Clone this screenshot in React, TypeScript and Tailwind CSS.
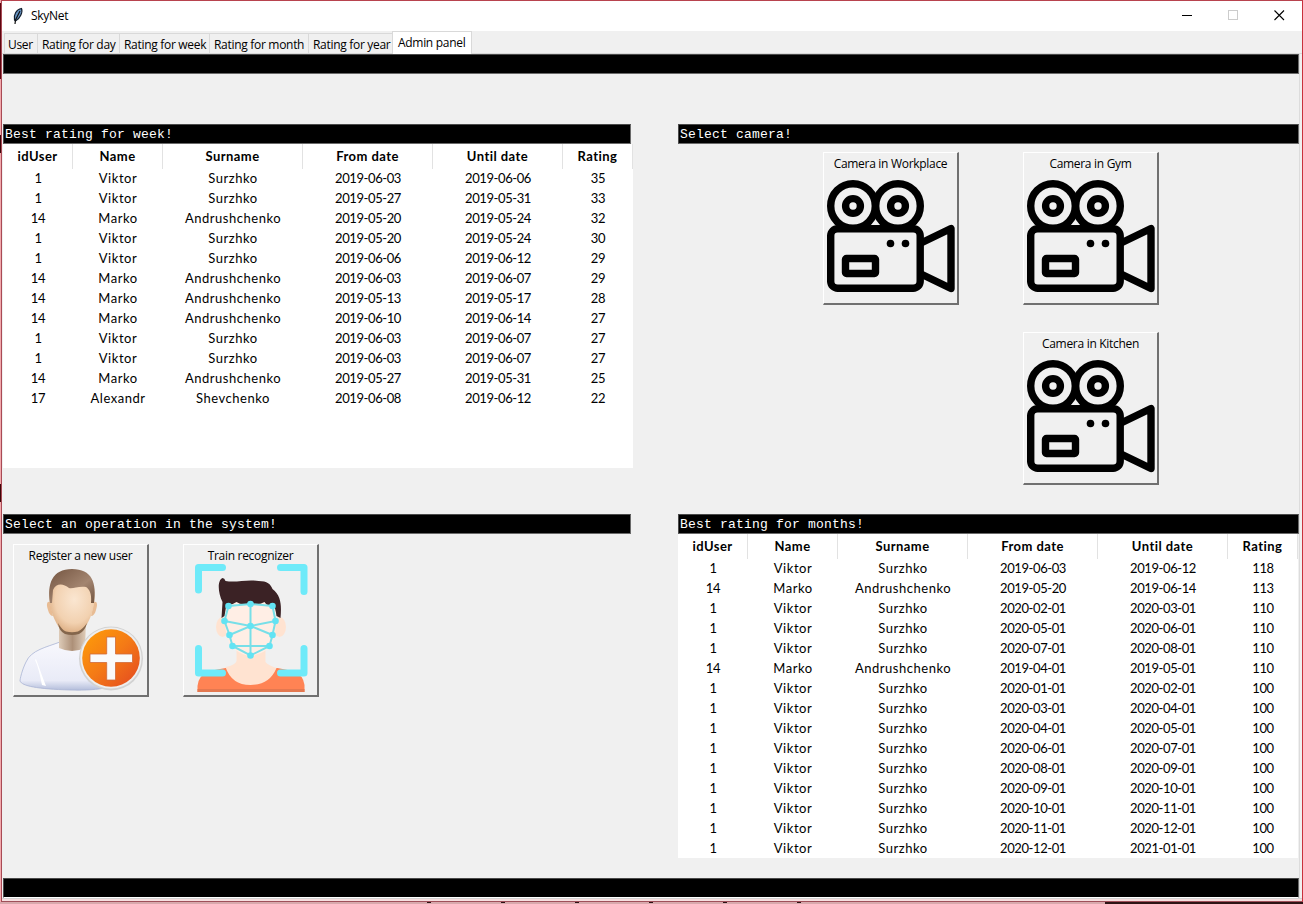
import React from 'react';

const week = [
  ['1', 'Viktor', 'Surzhko', '2019-06-03', '2019-06-06', '35'],
  ['1', 'Viktor', 'Surzhko', '2019-05-27', '2019-05-31', '33'],
  ['14', 'Marko', 'Andrushchenko', '2019-05-20', '2019-05-24', '32'],
  ['1', 'Viktor', 'Surzhko', '2019-05-20', '2019-05-24', '30'],
  ['1', 'Viktor', 'Surzhko', '2019-06-06', '2019-06-12', '29'],
  ['14', 'Marko', 'Andrushchenko', '2019-06-03', '2019-06-07', '29'],
  ['14', 'Marko', 'Andrushchenko', '2019-05-13', '2019-05-17', '28'],
  ['14', 'Marko', 'Andrushchenko', '2019-06-10', '2019-06-14', '27'],
  ['1', 'Viktor', 'Surzhko', '2019-06-03', '2019-06-07', '27'],
  ['1', 'Viktor', 'Surzhko', '2019-06-03', '2019-06-07', '27'],
  ['14', 'Marko', 'Andrushchenko', '2019-05-27', '2019-05-31', '25'],
  ['17', 'Alexandr', 'Shevchenko', '2019-06-08', '2019-06-12', '22'],
];

const months = [
  ['1', 'Viktor', 'Surzhko', '2019-06-03', '2019-06-12', '118'],
  ['14', 'Marko', 'Andrushchenko', '2019-05-20', '2019-06-14', '113'],
  ['1', 'Viktor', 'Surzhko', '2020-02-01', '2020-03-01', '110'],
  ['1', 'Viktor', 'Surzhko', '2020-05-01', '2020-06-01', '110'],
  ['1', 'Viktor', 'Surzhko', '2020-07-01', '2020-08-01', '110'],
  ['14', 'Marko', 'Andrushchenko', '2019-04-01', '2019-05-01', '110'],
  ['1', 'Viktor', 'Surzhko', '2020-01-01', '2020-02-01', '100'],
  ['1', 'Viktor', 'Surzhko', '2020-03-01', '2020-04-01', '100'],
  ['1', 'Viktor', 'Surzhko', '2020-04-01', '2020-05-01', '100'],
  ['1', 'Viktor', 'Surzhko', '2020-06-01', '2020-07-01', '100'],
  ['1', 'Viktor', 'Surzhko', '2020-08-01', '2020-09-01', '100'],
  ['1', 'Viktor', 'Surzhko', '2020-09-01', '2020-10-01', '100'],
  ['1', 'Viktor', 'Surzhko', '2020-10-01', '2020-11-01', '100'],
  ['1', 'Viktor', 'Surzhko', '2020-11-01', '2020-12-01', '100'],
  ['1', 'Viktor', 'Surzhko', '2020-12-01', '2021-01-01', '100'],
];

const heads = ['idUser', 'Name', 'Surname', 'From date', 'Until date', 'Rating'];

function Bar({ children, edge = 'border-b-[#6a6a6a]' }: { children?: React.ReactNode; edge?: string }) {
  return (
    <div
      className={`h-5 shrink-0 border border-t-[#4a4a4a] border-r-[#6a6a6a] border-l-[#4a4a4a] ${edge} bg-black pl-px font-['Liberation_Mono',monospace] text-[13px] leading-[19px] tracking-[0.2px] whitespace-pre text-white`}
    >
      {children}
    </div>
  );
}

function Table({ rows, cols, width }: { rows: string[][]; cols: string; width: string }) {
  return (
    <div className={`h-[324px] ${width} overflow-hidden bg-white font-[Lato,sans-serif] text-[13px] text-black`}>
      <div className={`grid h-6 ${cols} font-bold`}>
        {heads.map((h) => (
          <div key={h} className="border-r border-[#e2e2e2] text-center leading-[25px] tracking-[0.45px]">
            {h}
          </div>
        ))}
      </div>
      {rows.map((r, i) => (
        <div key={i} className={`grid h-5 ${cols} text-center leading-[21px]`}>
          {r.map((c, j) => (
            <div key={j} className={j === 1 || j === 2 ? 'tracking-[0.52px]' : 'tracking-[-0.4px]'}>
              {c}
            </div>
          ))}
        </div>
      ))}
    </div>
  );
}

function Camera() {
  return (
    <svg className="mt-[7px]" width="130" height="124" viewBox="0 0 130 124" fill="none" stroke="#000">
      <circle cx="27" cy="27" r="22.3" strokeWidth="7.4" />
      <circle cx="72" cy="27" r="22.3" strokeWidth="7.4" />
      <circle cx="27" cy="27" r="7.4" strokeWidth="7.4" />
      <circle cx="72" cy="27" r="7.4" strokeWidth="7.4" />
      <rect x="4.7" y="49.7" width="89.5" height="59.5" rx="7" strokeWidth="7.4" />
      <rect x="19.5" y="79.5" width="30" height="15" rx="1" strokeWidth="7.4" />
      <circle cx="64.5" cy="64.5" r="3.8" fill="#000" stroke="none" />
      <circle cx="79.5" cy="64.5" r="3.8" fill="#000" stroke="none" />
      <path d="M95 64 L125 49.500 V109.500 L95 95" strokeWidth="7.4" strokeLinejoin="round" />
    </svg>
  );
}

function NewUser() {
  return (
    <svg className="mt-[3px]" width="130" height="128" viewBox="-1 0 130 128">
      <defs>
        <linearGradient id="hair" x1="0" y1="0" x2="1" y2="1">
          <stop offset="0" stopColor="#735440" />
          <stop offset=".6" stopColor="#a38570" />
          <stop offset="1" stopColor="#715440" />
        </linearGradient>
        <radialGradient id="face" cx=".55" cy=".4" r=".65">
          <stop offset="0" stopColor="#fae6d1" />
          <stop offset=".65" stopColor="#f2d1b0" />
          <stop offset="1" stopColor="#d9a87b" />
        </radialGradient>
        <linearGradient id="neck" x1="0" y1="0" x2="1" y2="0">
          <stop offset="0" stopColor="#ddcbb8" />
          <stop offset=".5" stopColor="#ad9078" />
          <stop offset="1" stopColor="#e0cdb9" />
        </linearGradient>
        <linearGradient id="shirt" x1="0" y1="0" x2="0" y2="1">
          <stop offset="0" stopColor="#f8f8fd" />
          <stop offset=".8" stopColor="#e9ebf7" />
          <stop offset="1" stopColor="#b4bedb" />
        </linearGradient>
        <linearGradient id="plus" x1="0" y1="0" x2="1" y2="1">
          <stop offset="0" stopColor="#ff9f08" />
          <stop offset=".5" stopColor="#f47a16" />
          <stop offset="1" stopColor="#e34721" />
        </linearGradient>
      </defs>
      <path d="M43 75 C30 80 14 83 9 95 C5 103 3 112 3 114 C5 119 20 122 53 123 C85 124 101 119 101 114 C96 90 88 82 68 76Z" fill="url(#shirt)" stroke="#aab4d4" strokeWidth=".8" />
      <path d="M19 92 C22 100 25 109 29 119 L25 118 C23 108 21 99 18 93Z" fill="#fff" />
      <path d="M42 55 L42 81 Q55 87 68 81 L69 55Z" fill="url(#neck)" />
      <path d="M33 35 C30 34 29 37 31 43 C32 47 34 49 36 49 M77 35 C80 34 81 37 79 43 C78 47 76 49 74 49" fill="#e8bc94" />
      <path d="M33 20 C31 35 34 49 43 62 Q47 66 55 66 Q63 66 67 62 C76 49 79 35 77 20 C65 7 45 7 33 20Z" fill="url(#face)" />
      <path d="M41 56 Q45 63 49 64.500 Q55 66 61 64.500 Q66 62 70 56 Q68 64 62 67 Q55 69 48 67 Q42 64 41 56Z" fill="#84664c" />
      <path d="M33 36 C30 17 35 2 55 2 C75 2 80 16 77 36 L74 36 C75 26 72 22 69 20 C61 19 56 22 52 21 C46 16 39 16 36 23 L35 36Z" fill="url(#hair)" />
      <circle cx="94" cy="91.5" r="32" fill="#d2d2d2" />
      <circle cx="94" cy="91" r="30.600" fill="#eeeeee" />
      <circle cx="94" cy="91" r="28.8" fill="url(#plus)" />
      <path d="M89.700 70 H98.500 V87 H115.500 V95.5 H98.500 V113 H89.700 V95.5 H73 V87 H89.700Z" fill="#fafafa" stroke="#cf6a3a" strokeWidth=".8" />
    </svg>
  );
}

function Recognizer() {
  return (
    <svg className="-mt-[1px]" width="130" height="130" viewBox="-7.5 0 130 130">
      <path d="M4 129 V123 Q5 112 16 108 L32 105 H84 L99 108 Q110 112 111 122 V129Z" fill="#ff8354" />
      <path d="M4 126 H111 V129 H4Z" fill="#e47850" />
      <path d="M43 86 V98 Q42 102 32 104 Q38 122 57 122 Q76 122 83 105 Q74 102 72 99 V86Z" fill="#ffe3d1" />
      <ellipse cx="29" cy="64" rx="6.5" ry="10" fill="#ffe3d1" />
      <ellipse cx="86" cy="64" rx="6.5" ry="10" fill="#ffe3d1" />
      <path d="M32 40 Q57 30 82 40 V68 Q80 83 73 87 Q57 98 42 87 Q34 82 32 66Z" fill="#ffeee5" />
      <path d="M28 55 L29 39 C24 29 24 17 29 15 Q31 15 32 18 C43 20 53 16 65 18 C74 18 77 21 79 26 C88 33 88 43 87 55 L83 53 Q82 45 80 42 Q74 44 71 39 Q64 43 56 40 Q49 43 43 39 Q37 43 33 41 L31 53Z" fill="#3b2225" />
      <g fill="none" stroke="#6eeaf9" strokeWidth="7" strokeLinecap="round" strokeLinejoin="round">
        <path d="M29 4.5 H5 V27" />
        <path d="M87 4.5 H110.500 V28.500" />
        <path d="M5 85.500 V110 H29" />
        <path d="M87 110 H110.500 V85.500" />
      </g>
      <g fill="none" stroke="#78dfe8" strokeWidth="2">
        <path d="M35 43 L57 41 L79 43 L82 58 L79 72 L76 83 L57 92.500 L39 83 L36 72 L31 58Z" />
        <path d="M57 41 V92 M31 58 L57 63 L82 58 M36 72 L57 63 L79 72 M39 83 H76" />
      </g>
      <g fill="#62e3f3">
        <circle cx="35" cy="43" r="3.300" /><circle cx="57" cy="41" r="3.300" /><circle cx="79" cy="43" r="3.300" />
        <circle cx="31" cy="58" r="3.300" /><circle cx="57" cy="63" r="3.300" /><circle cx="82" cy="58" r="3.300" />
        <circle cx="36" cy="72" r="3.300" /><circle cx="79" cy="72" r="3.300" />
        <circle cx="39" cy="83" r="3.300" /><circle cx="76" cy="83" r="3.300" /><circle cx="57" cy="92.500" r="3.300" />
      </g>
    </svg>
  );
}

function ImageButton({ label, children }: { label: string; children: React.ReactNode }) {
  return (
    <button className="flex h-[153px] w-[136px] flex-col items-center border-t border-r-2 border-b-2 border-l border-t-white border-r-[#707070] border-b-[#707070] border-l-white bg-[#f0f0f0] pt-[2px] font-['Open_Sans',sans-serif] text-[12px] leading-[17px] tracking-[-0.3px] text-black">
      <span className="whitespace-nowrap">{label}</span>
      <span className="flex">{children}</span>
    </button>
  );
}

const tabs = [
  ['User', 'w-[33px]'],
  ['Rating for day', 'w-[82px]'],
  ['Rating for week', 'w-[90px]'],
  ['Rating for month', 'w-[99px]'],
  ['Rating for year', 'w-[84px]'],
];

export default function App() {
  return (
    <div className="grid h-[904px] w-[1303px] grid-cols-[1px_1302px] grid-rows-[902px_2px] overflow-hidden bg-[#d8a9ad]">
      <div className="flex flex-col bg-[#f2a9ad]">
        <div className="mt-[3px] h-[76px] bg-[#5c0610]" />
        <div className="mt-[56px] h-[18px] bg-[#3c0508]" />
        <div className="mt-[331px] h-[18px] bg-[#3c0508]" />
      </div>
      <div className="flex h-[902px] flex-col border border-r-[#c8303c] border-t-[#b8434e] border-b-[#a0505a] border-l-[#a84a55] bg-[#f0f0f0] font-['Open_Sans',sans-serif] text-[12px] text-black">
        <header className="flex h-[30px] shrink-0 items-center bg-white pl-[9px]">
          <svg width="14" height="18" viewBox="0 0 14 18">
            <path d="M3.500 13 C2.500 8 5 2.500 10.500 1.500 C12 5 9 12 4.500 14Z" fill="#6794c4" stroke="#14202f" strokeWidth="1.200" />
            <path d="M4 17 L4.500 13 L9 4" fill="none" stroke="#111" strokeWidth="1.200" />
          </svg>
          <span className="ml-[6px] tracking-[-0.3px]">SkyNet</span>
          <div className="mr-[17px] mb-[2px] ml-auto flex items-center gap-[34px]">
            <svg className="mr-px" width="11" height="11"><path d="M0 5.500H10" stroke="#000" /></svg>
            <svg width="11" height="11"><rect x=".5" y=".5" width="9" height="9" fill="none" stroke="#ccc" /></svg>
            <svg className="ml-px" width="11" height="11"><path d="M.5 .5L10 10M10 .5L.5 10" stroke="#000" strokeWidth="1.100" /></svg>
          </div>
        </header>
        <nav className="flex h-[23px] shrink-0 items-end border-b border-[#d9d9d9] pl-[2px] leading-[21px] tracking-[-0.3px] whitespace-nowrap">
          {tabs.map(([t, w], i) => (
            <div key={t} className={`${w} ${i ? 'pl-[4px]' : 'pl-[3px]'} h-[20px] border-t border-l border-[#d9d9d9]`}>{t}</div>
          ))}
          <div className="-mb-px h-[23px] w-[80px] border border-b-0 border-[#d9d9d9] bg-white pl-[5px] leading-[22px]">Admin panel</div>
        </nav>
        <main className="mr-[2px] ml-px flex h-[844px] shrink-0 flex-col border-r border-[#dcdcdc]">
          <Bar />
          <div className="mt-[50px] grid h-[390px] shrink-0 grid-cols-[630px_621px] gap-[45px]">
            <section className="flex flex-col">
              <div className="mr-[2px]"><Bar>Best rating for week!</Bar></div>
              <Table rows={week} cols="grid-cols-[70px_90px_140px_130px_130px_70px]" width="w-[630px]" />
            </section>
            <section className="flex flex-col">
              <Bar>Select camera!</Bar>
              <div className="mt-[8px] grid grid-cols-[136px_136px] gap-x-[64px] gap-y-[27px] pl-[145px]">
                <ImageButton label="Camera in Workplace"><Camera /></ImageButton>
                <ImageButton label="Camera in Gym"><Camera /></ImageButton>
                <span />
                <ImageButton label="Camera in Kitchen"><Camera /></ImageButton>
              </div>
            </section>
          </div>
          <div className="grid h-[364px] shrink-0 grid-cols-[630px_621px] gap-[45px]">
            <section className="flex flex-col">
              <div className="mr-[2px]"><Bar>Select an operation in the system!</Bar></div>
              <div className="mt-[10px] flex gap-[34px] pl-[10px]">
                <ImageButton label="Register a new user"><NewUser /></ImageButton>
                <ImageButton label="Train recognizer"><Recognizer /></ImageButton>
              </div>
            </section>
            <section className="flex flex-col">
              <Bar>Best rating for months!</Bar>
              <Table rows={months} cols="grid-cols-[70px_90px_130px_130px_130px_70px]" width="w-[620px]" />
            </section>
          </div>
          <Bar edge="border-b-white" />
        </main>
        <div className="h-px shrink-0 bg-[#d4d4d4]" />
        <div className="h-[2px] shrink-0 bg-[#f6dfe0]" />
      </div>
      <div className="col-span-2 flex">
        <div className="flex w-[1105px] gap-[70px] pl-[427px]">
          {[0, 1, 2, 3, 4, 5].map((n) => (
            <div key={n} className="h-px w-[4px] bg-[#2c1214]" />
          ))}
        </div>
        <div className="grow bg-[#2e1315]" />
      </div>
    </div>
  );
}
